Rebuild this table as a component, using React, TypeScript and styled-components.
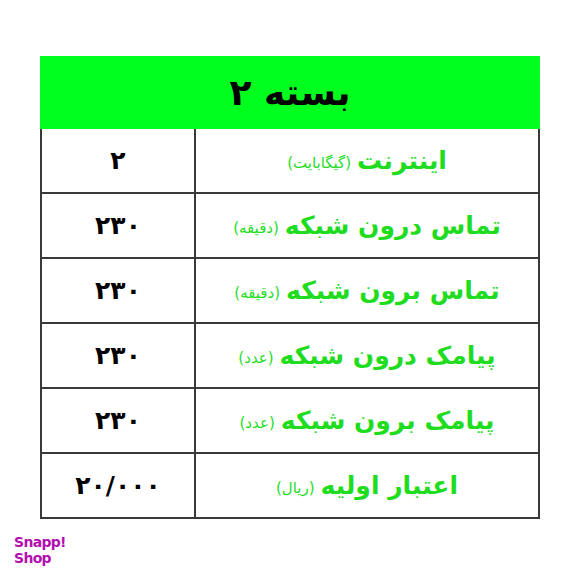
import styled, { createGlobalStyle } from 'styled-components';

const GlobalStyle = createGlobalStyle`
  html, body {
    margin: 0;
    padding: 0;
    background: #ffffff;
  }
  body {
    width: 576px;
    height: 576px;
    overflow: hidden;
    font-family: "DejaVu Sans", "Noto Sans", sans-serif;
  }
`;

const rows = [
  { label: 'اینترنت', unit: 'گیگابایت', value: '۲' },
  { label: 'تماس درون شبکه', unit: 'دقیقه', value: '۲۳۰' },
  { label: 'تماس برون شبکه', unit: 'دقیقه', value: '۲۳۰' },
  { label: 'پیامک درون شبکه', unit: 'عدد', value: '۲۳۰' },
  { label: 'پیامک برون شبکه', unit: 'عدد', value: '۲۳۰' },
  { label: 'اعتبار اولیه', unit: 'ریال', value: '۲۰/۰۰۰' },
];

export default function App() {
  return (
    <>
      <GlobalStyle />
      <StyledPage>
        <StyledTable>
          <StyledHeader>بسته ۲</StyledHeader>
          <StyledBody>
            {rows.map((row, i) => (
              <StyledRow key={i}>
                <StyledValue>{row.value}</StyledValue>
                <StyledLabel>
                  <StyledLabelText>{row.label}</StyledLabelText>
                  <StyledUnit>({row.unit})</StyledUnit>
                </StyledLabel>
              </StyledRow>
            ))}
          </StyledBody>
        </StyledTable>
        <StyledLogo>
          <span>Snapp!</span>
          <span>Shop</span>
        </StyledLogo>
      </StyledPage>
    </>
  );
}

const StyledPage = styled.div`
  width: 576px;
  height: 576px;
  box-sizing: border-box;
  padding: 56px 36px 0 40px;
  display: flex;
  flex-direction: column;
`;

const StyledTable = styled.div`
  width: 500px;
  display: flex;
  flex-direction: column;
`;

const StyledHeader = styled.div`
  height: 73px;
  background: #00ff1e;
  display: flex;
  align-items: center;
  justify-content: center;
  direction: rtl;
  font-size: 36px;
  font-weight: 700;
  color: #000;
`;

const StyledBody = styled.div`
  display: flex;
  flex-direction: column;
  border: 2px solid #3a3a3a;
  border-top: none;
`;

const StyledRow = styled.div`
  height: 65px;
  display: grid;
  grid-template-columns: 154px 1fr;
  border-bottom: 2px solid #3a3a3a;
  box-sizing: border-box;

  &:last-child {
    border-bottom: none;
    height: 63px;
  }
`;

const StyledValue = styled.div`
  display: flex;
  align-items: center;
  justify-content: center;
  border-right: 2px solid #3a3a3a;
  font-size: 25px;
  font-weight: 700;
  color: #000;
  direction: ltr;
`;

const StyledLabel = styled.div`
  display: flex;
  align-items: center;
  justify-content: center;
  direction: rtl;
  gap: 6px;
  color: #1fdc1f;
`;

const StyledLabelText = styled.span`
  font-size: 25px;
  font-weight: 700;
`;

const StyledUnit = styled.span`
  font-size: 15px;
  font-weight: 400;
  margin-top: 4px;
`;

const StyledLogo = styled.div`
  margin: 15px 0 0 -26px;
  display: flex;
  flex-direction: column;
  font-family: "DejaVu Sans", "Liberation Sans", sans-serif;
  font-weight: 700;
  font-size: 14px;
  line-height: 16px;
  color: #b20fae;
  letter-spacing: -0.7px;
`;
